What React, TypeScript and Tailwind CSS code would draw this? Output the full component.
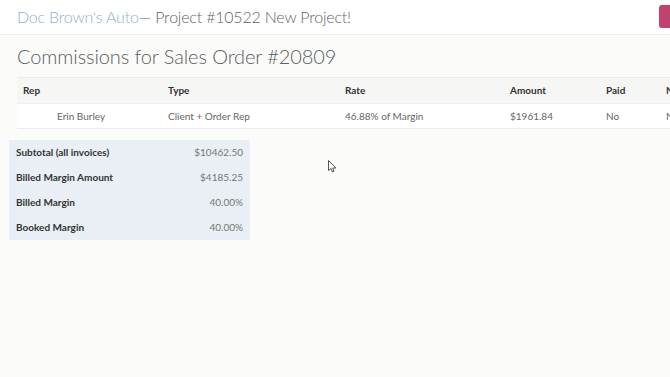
import { ReactNode } from "react";

const cols = ["w-[151px] pl-[6px]", "w-[177px]", "w-[165px]", "w-[96px]", "w-[60px]", "w-[40px]"];

function Cell({ className, children }: { className: string; children?: ReactNode }) {
  return <div className={`shrink-0 ${className}`}>{children}</div>;
}

const summary = [
  ["Subtotal (all invoices)", "$10462.50"],
  ["Billed Margin Amount", "$4185.25"],
  ["Billed Margin", "40.00%"],
  ["Booked Margin", "40.00%"],
];

export default function App() {
  return (
    <div className="w-[670px] h-[377px] overflow-hidden bg-[#fbfbf9] font-['Lato',sans-serif] text-[#555]">
      <header className="relative h-[35px] bg-white border-b border-[#f0f0ee] flex items-center pl-[17px]">
        <span className="text-[16px] font-light text-[#8fb3c4] tracking-[-0.2px]">Doc Brown's Auto</span>
        <span className="text-[16px] font-light text-[#5f6366] tracking-[-0.2px]">— Project #10522 New Project!</span>
        <div className="absolute left-[659px] top-[5px] w-[20px] h-[23px] rounded-[3px] bg-[#c3426b]" />
      </header>

      <div className="pl-[17px]">
        <h1 className="h-[43px] flex items-center text-[20px] font-light text-[#5a5e61] tracking-[-0.1px] border-b border-[#ececea]">
          Commissions for Sales Order #20809
        </h1>
        <div className="w-[700px] border-b border-[#ececea] text-[10px]">
          <div className="h-[25px] flex items-center bg-[#f6f6f4] font-bold text-[#333]">
            {["Rep", "Type", "Rate", "Amount", "Paid", "N"].map((h, i) => (
              <Cell key={h} className={cols[i]}>{h}</Cell>
            ))}
          </div>
          <div className="h-[25px] flex items-center bg-white text-[#666] border-t border-[#f0f0ee]">
            <Cell className={`${cols[0]} pl-[40px]`}>Erin Burley</Cell>
            <Cell className={cols[1]}>Client + Order Rep</Cell>
            <Cell className={cols[2]}>46.88% of Margin</Cell>
            <Cell className={cols[3]}>$1961.84</Cell>
            <Cell className={cols[4]}>No</Cell>
            <Cell className={cols[5]}>N</Cell>
          </div>
        </div>
      </div>

      <div className="relative">
        <div className="ml-[9px] mt-[11px] w-[241px] bg-[#e9eff4] text-[10px]">
          {summary.map(([k, v]) => (
            <div key={k} className="h-[25px] flex items-center justify-between px-[7px]">
              <span className="font-bold text-[#333]">{k}</span>
              <span className="text-[#777]">{v}</span>
            </div>
          ))}
        </div>
        <svg className="absolute left-[328px] top-[20px]" width="9" height="13" viewBox="0 0 9 13">
          <path d="M0.5 0.5 L0.5 10.5 L3 8.5 L4.5 12 L6 11.3 L4.6 8 L8 8 Z" fill="white" stroke="#555" strokeWidth="1" />
        </svg>
      </div>
    </div>
  );
}
